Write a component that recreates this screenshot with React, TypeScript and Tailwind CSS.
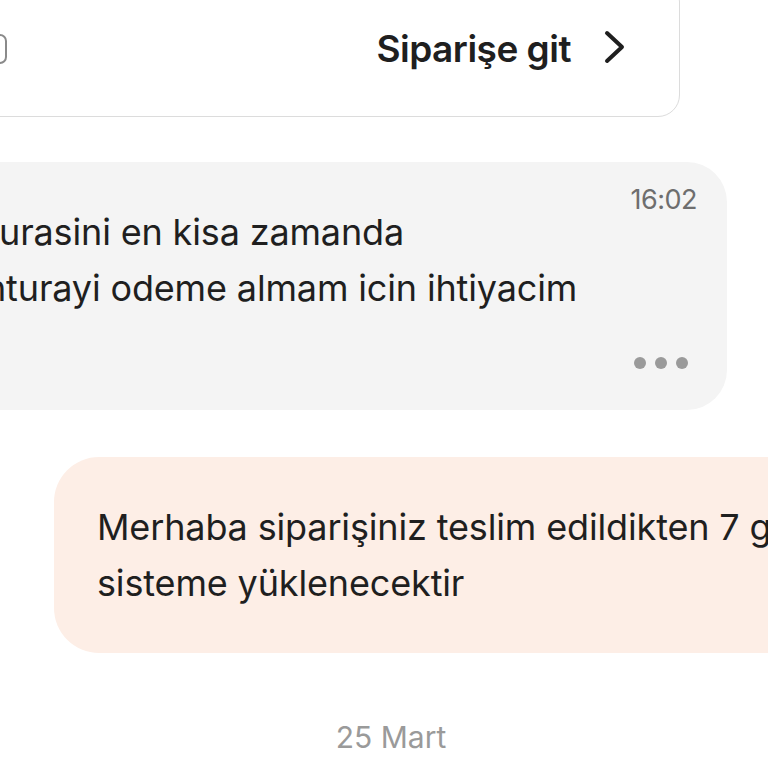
import React from "react";

export default function App() {
  return (
    <div className="w-[768px] h-[768px] overflow-hidden bg-white font-['Inter',sans-serif] text-[#1f1f1f]">
      {/* order card */}
      <div className="ml-[-60px] mt-[-20px] w-[740px] h-[137px] rounded-[22px] border-[1.5px] border-[#dcdcdc] bg-white flex items-center justify-between pr-[52px]">
        <div className="w-[34px] h-[30px] ml-[32px] rounded-[7px] border-[2.5px] border-[#8a8a8a]" />
        <div className="flex items-center gap-[32px]">
          <span className="text-[37px] font-semibold tracking-[-0.5px] leading-none">Siparişe git</span>
          <svg width="24" height="34" viewBox="0 0 24 34" fill="none" className="mt-[-3px]">
            <path d="M4 3 L19 17 L4 31" stroke="#1f1f1f" strokeWidth="4" strokeLinecap="round" strokeLinejoin="round" />
          </svg>
        </div>
      </div>

      {/* incoming bubble */}
      <div className="mt-[45px] ml-[-40px] w-[767px] h-[248px] rounded-[40px] bg-[#f4f4f4] flex justify-between">
        <div className="pt-[42px] pl-[39px] text-[36px] leading-[56px] whitespace-nowrap tracking-[-0.15px]">
          <div>urasini en kisa zamanda</div>
          <div className="ml-[-14px]">nturayi odeme almam icin ihtiyacim</div>
        </div>
        <div className="flex flex-col items-end justify-between pt-[24px] pb-[41px] pr-[30px]">
          <span className="text-[27px] leading-[28px] text-[#6e6e6e] tracking-[-0.5px]">16:02</span>
          <div className="flex gap-[9px] mr-[9px]">
            <span className="w-[12px] h-[12px] rounded-full bg-[#9a9a9a]" />
            <span className="w-[12px] h-[12px] rounded-full bg-[#9a9a9a]" />
            <span className="w-[12px] h-[12px] rounded-full bg-[#9a9a9a]" />
          </div>
        </div>
      </div>

      {/* outgoing bubble */}
      <div className="mt-[47px] ml-[54px] w-[780px] h-[196px] rounded-[45px] bg-[#fdeee6] pt-[42px] pl-[43px] text-[36px] leading-[56px] whitespace-nowrap tracking-[-0.15px]">
        <div>Merhaba siparişiniz teslim edildikten 7 gün içinde fatura</div>
        <div>sisteme yüklenecektir</div>
      </div>

      {/* date */}
      <div className="mt-[66px] pl-[14px] text-center text-[30px] leading-[36px] text-[#9a9a9a]">25 Mart</div>
    </div>
  );
}
